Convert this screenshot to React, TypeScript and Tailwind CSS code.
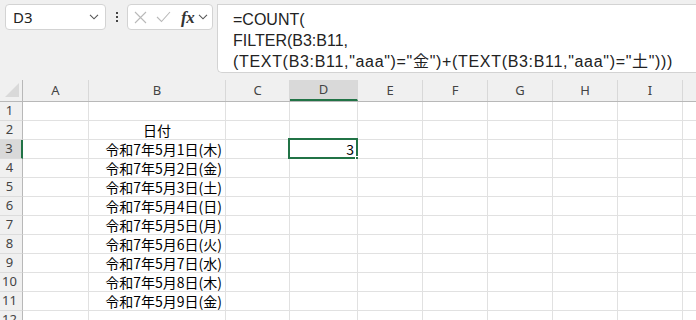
import React from "react";

const COLS = [
  { name: "A", w: 66 },
  { name: "B", w: 137 },
  { name: "C", w: 64 },
  { name: "D", w: 68 },
  { name: "E", w: 65 },
  { name: "F", w: 65 },
  { name: "G", w: 65 },
  { name: "H", w: 65 },
  { name: "I", w: 65 },
  { name: "", w: 65 },
];

const DAYS = ["木", "金", "土", "日", "月", "火", "水", "木", "金"];

function cellText(row: number, col: string): { text: string; align: string } | null {
  if (col === "B" && row === 2) return { text: "日付", align: "justify-center" };
  if (col === "B" && row >= 3 && row <= 11)
    return { text: `令和7年5月${row - 2}日(${DAYS[row - 3]})`, align: "justify-end" };
  if (col === "D" && row === 3) return { text: "3", align: "justify-end" };
  return null;
}

function Chevron() {
  return (
    <svg width="10" height="6" viewBox="0 0 10 6" fill="none" stroke="#555" strokeWidth="1.1">
      <path d="M1 0.8 L5 4.8 L9 0.8" />
    </svg>
  );
}

export default function App() {
  const rows = Array.from({ length: 12 }, (_, i) => i + 1);

  return (
    <div className="w-[696px] h-[320px] overflow-hidden bg-[#f0f0f0] font-['Noto_Sans','Noto_Sans_CJK_JP',sans-serif]">
      {/* Formula bar */}
      <div className="flex items-start h-[80px] pt-[4px]">
        <div className="ml-[5px] w-[101px] h-[26px] bg-white border border-[#d3d3d3] rounded-[4px] flex items-center justify-between pl-[7px] pr-[6px]">
          <span className="text-[15px] text-[#222] leading-none">D3</span>
          <Chevron />
        </div>
        <div className="w-[21px] h-[26px] flex flex-col items-center justify-center gap-[2px]">
          <span className="w-[2px] h-[2px] bg-[#444]" />
          <span className="w-[2px] h-[2px] bg-[#444]" />
          <span className="w-[2px] h-[2px] bg-[#444]" />
        </div>
        <div className="w-[86px] h-[26px] bg-white border border-[#d3d3d3] rounded-[4px] flex items-center pl-[6px] pr-[3px]">
          <svg width="13" height="13" viewBox="0 0 13 13" stroke="#b9b9b9" strokeWidth="1.1" fill="none">
            <path d="M1 1 L12 12 M12 1 L1 12" />
          </svg>
          <svg className="ml-[9px]" width="15" height="12" viewBox="0 0 15 12" stroke="#b9b9b9" strokeWidth="1.1" fill="none">
            <path d="M1 6 L5.5 10.5 L14 1" />
          </svg>
          <span className="ml-[10px] font-['Liberation_Serif',serif] italic font-bold text-[17px] leading-none text-[#333] tracking-[-0.3px]">
            fx
          </span>
          <span className="ml-[3px]">
            <Chevron />
          </span>
        </div>
        <div className="ml-[4px] flex-1 h-[69px] bg-white border-t border-l border-b border-[#d3d3d3] rounded-bl-[5px] pl-[15px] pt-[4px] text-[16px] leading-[21px] text-[#222] font-['Liberation_Sans','Noto_Sans_CJK_JP',sans-serif] whitespace-nowrap">
          <div>=COUNT(</div>
          <div>FILTER(B3:B11,</div>
          <div className="tracking-[0.68px]">(TEXT(B3:B11,"aaa")="金")+(TEXT(B3:B11,"aaa")="土")))</div>
        </div>
      </div>

      {/* Column headers */}
      <div className="flex h-[22px] border-b border-[#b8b8b8] bg-[#f0f0f0]">
        <div className="w-[23px] shrink-0 border-r border-[#b8b8b8] relative">
          <svg className="absolute left-[5px] top-[3px]" width="14" height="14" viewBox="0 0 14 14">
            <path d="M14 0 L14 14 L0 14 Z" fill="#d9d9d9" />
          </svg>
        </div>
        {COLS.map((c, i) => (
          <div
            key={i}
            style={{ width: c.w }}
            className={`shrink-0 border-r border-[#d8d8d8] flex items-center justify-center text-[13px] text-[#444] ${
              c.name === "D" ? "bg-[#d9d9d9] border-b-2 border-b-[#217346]" : ""
            }`}
          >
            {c.name}
          </div>
        ))}
      </div>

      {/* Rows */}
      {rows.map((r) => (
        <div key={r} className="flex h-[19px]">
          <div
            className={`w-[23px] shrink-0 border-b border-[#dcdcdc] flex items-center justify-center pr-[3px] text-[13px] text-[#444] ${
              r === 3 ? "bg-[#d9d9d9] border-r-2 border-r-[#217346]" : "bg-[#f0f0f0] border-r border-r-[#b8b8b8]"
            }`}
          >
            {r}
          </div>
          {COLS.map((c, i) => {
            const t = cellText(r, c.name);
            const selected = r === 3 && c.name === "D";
            return (
              <div
                key={i}
                style={{ width: c.w }}
                className="shrink-0 bg-white border-r border-b border-[#e1e1e1] relative"
              >
                {t && (
                  <div
                    className={`absolute inset-0 flex items-center ${t.align} px-[3px] text-[14px] leading-none text-black font-['Noto_Sans_CJK_JP',sans-serif]`}
                  >
                    {t.text}
                  </div>
                )}
                {selected && (
                  <>
                    <div className="absolute left-[-2px] top-[-2px] right-[-1px] bottom-[-1px] border-2 border-[#217346]" />
                    <div className="absolute right-[-4px] bottom-[-4px] w-[6px] h-[6px] bg-[#217346] border border-white" />
                  </>
                )}
              </div>
            );
          })}
        </div>
      ))}
    </div>
  );
}
